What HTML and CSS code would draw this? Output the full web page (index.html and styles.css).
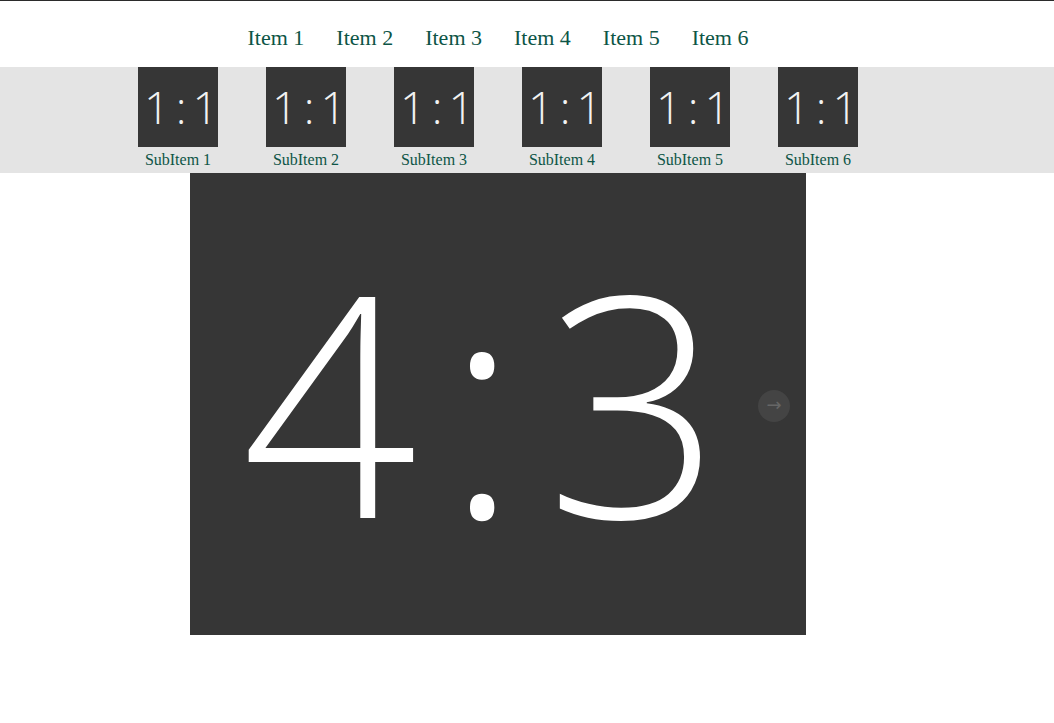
FILE: index.html
```html
<!DOCTYPE html>
<html>
	<head>
		<meta charset="UTF-8">
		<title></title>
		<link rel="stylesheet" href="styles.css">
	</head>
	<body>
		<div id="wrap">
			<ul id="nav" class="clearfix">
				<li><a href="">Item 1</a></li>
				<li><a href="">Item 2</a></li>
				<li><a href="">Item 3</a></li>
				<li><a href="">Item 4</a></li>
				<li><a href="">Item 5</a></li>
				<li><a href="">Item 6</a></li>
			</ul>
			<div id="subBar">
				<ul id="subList">
					<li><div class="thumb">1:1</div><span>SubItem 1</span></li>
					<li><div class="thumb">1:1</div><span>SubItem 2</span></li>
					<li><div class="thumb">1:1</div><span>SubItem 3</span></li>
					<li><div class="thumb">1:1</div><span>SubItem 4</span></li>
					<li><div class="thumb">1:1</div><span>SubItem 5</span></li>
					<li><div class="thumb">1:1</div><span>SubItem 6</span></li>
				</ul>
			</div>
			<div id="stage">
				<div class="big">4<span class="colon">:</span>3</div>
				<span class="next">&rarr;</span>
			</div>
		</div>
	</body>
</html>
```

FILE: styles.css
```css
body,ul,li{
	margin: 0;
	padding: 0;
}
li{
	list-style: none;
}
a{
	text-decoration: none;
}
body{
	border-top: 1px solid #2b2b2b;
	font-family: "Liberation Serif", serif;
}
#nav{
	display: flex;
	justify-content: center;
	gap: 32px;
	width: 996px;
	height: 66px;
	padding-top: 8px;
	box-sizing: border-box;
	align-items: center;
}
#nav a{
	font-size: 22px;
	color: #0d5546;
	line-height: 24px;
}
#subBar{
	background: #e4e4e4;
	height: 106px;
}
#subList{
	display: flex;
	justify-content: center;
	gap: 48px;
	width: 996px;
}
#subList li{
	display: flex;
	flex-direction: column;
	align-items: center;
	width: 80px;
}
#subList .thumb{
	width: 80px;
	height: 80px;
	background: #363636;
	color: #f2f2f2;
	font-family: "Open Sans", sans-serif;
	font-weight: 300;
	font-size: 45px;
	line-height: 80px;
	text-align: center;
	letter-spacing: 6px;
	padding-left: 6px;
	box-sizing: border-box;
}
#subList span{
	font-size: 16px;
	line-height: 26px;
	color: #0d5546;
	white-space: nowrap;
}
#stage{
	position: relative;
	width: 616px;
	height: 462px;
	margin-left: 190px;
	background: #363636;
	display: flex;
	align-items: center;
	justify-content: center;
}
#stage .big{
	font-family: "Open Sans", sans-serif;
	font-weight: 300;
	font-size: 308px;
	color: #fff;
	line-height: 1;
	padding-bottom: 10px;
	margin-right: 33px;
}
#stage .colon{
	margin: 0 27px 0 28px;
}
#stage .next{
	position: absolute;
	right: 16px;
	top: 217px;
	width: 32px;
	height: 32px;
	border-radius: 50%;
	background: #444;
	color: #666;
	font-family: "DejaVu Sans", sans-serif;
	font-size: 18px;
	line-height: 30px;
	text-align: center;
}
```
